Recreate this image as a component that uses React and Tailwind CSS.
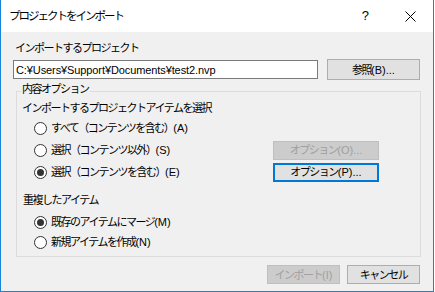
import React from 'react';

const font = { fontFamily: '"Liberation Sans", "Noto Sans CJK JP", sans-serif' };

// Japanese glyphs are squeezed to mimic Meiryo UI; ASCII runs keep normal spacing.
const JText = ({ text }) =>
  text.split(/([\x20-\x7e¥]+)/).map((part, i) =>
    /^[\x20-\x7e¥]+$/.test(part) ? (
      <span key={i} className="tracking-[0px]">{part}</span>
    ) : (
      <span key={i}>{part}</span>
    )
  );

const Radio = ({ checked, label }) => (
  <div className="flex items-center">
    <span className="w-[13px] h-[13px] rounded-full border border-[#333333] bg-white flex items-center justify-center">
      {checked && <span className="w-[7px] h-[7px] rounded-full bg-[#333333]" />}
    </span>
    <span className="ml-[4px] text-[11px] tracking-[-1.5px] leading-[16px]">
      <JText text={label} />
    </span>
  </div>
);

const Button = ({ label, variant = 'normal', className = '' }) => {
  const styles = {
    normal: 'border border-[#adadad] bg-[#e1e1e1] text-black',
    disabled: 'border border-[#bfbfbf] bg-[#cccccc] text-[#a0a0a0]',
    focused: 'border-2 border-[#0078d7] bg-[#e1e1e1] text-black',
  };
  return (
    <div
      className={`flex items-center justify-center text-[11px] tracking-[-1.5px] leading-[16px] ${styles[variant]} ${className}`}
    >
      <JText text={label} />
    </div>
  );
};

export default function App() {
  return (
    <div className="w-[435px] h-[292px] bg-white" style={font}>
      <div className="w-[434px] h-[292px] flex flex-col border-l border-r border-b border-[#1883d7] bg-[#f0f0f0] text-black">
        {/* Title bar */}
        <div className="h-[32px] bg-white flex items-center pl-[8px]">
          <span className="text-[11.5px] tracking-[-2px] leading-[16px]">プロジェクトをインポート</span>
          <span className="ml-auto mr-[36px] text-[13px] leading-[16px]">?</span>
          <svg className="mr-[17px]" width="11" height="11" viewBox="0 0 11 11">
            <path d="M0.5 0.5 L10.5 10.5 M10.5 0.5 L0.5 10.5" stroke="#000" strokeWidth="1" />
          </svg>
        </div>

        {/* Client area */}
        <div className="flex flex-col pl-[12px] pr-[13px] pt-[8px]">
          <div className="pl-[2px] text-[11px] tracking-[-1.5px] leading-[16px]">インポートするプロジェクト</div>
          <div className="mt-[3px] flex items-center">
            <div className="w-[305px] h-[19px] border border-[#7a7a7a] bg-white flex items-center pl-[2px] text-[11px] tracking-[-0.1px] leading-[16px]">
              C:¥Users¥Support¥Documents¥test2.nvp
            </div>
            <Button label="参照(B)..." className="ml-[9px] w-[93px] h-[21px]" />
          </div>

          {/* Content options group */}
          <div className="relative mt-[11px] ml-[3px] w-[405px] border border-[#dcdcdc] pl-[5px] pr-[41px] pt-[8px] pb-[4px]">
            <span className="absolute -top-[11px] left-[4px] px-[1px] bg-[#f0f0f0] text-[11px] tracking-[-1.5px] leading-[16px]">
              内容オプション
            </span>
            <div className="text-[11px] tracking-[-1.5px] leading-[16px]">インポートするプロジェクトアイテムを選択</div>
            <div className="mt-[1px] flex flex-col">
              <div className="h-[22px] flex items-center pl-[12px]">
                <Radio label="すべて（コンテンツを含む）(A)" />
              </div>
              <div className="h-[22px] flex items-center justify-between pl-[12px]">
                <Radio label="選択（コンテンツ以外）(S)" />
                <Button variant="disabled" label="オプション(O)..." className="w-[106px] h-[19px]" />
              </div>
              <div className="h-[22px] flex items-center justify-between pl-[12px]">
                <Radio checked label="選択（コンテンツを含む）(E)" />
                <Button variant="focused" label="オプション(P)..." className="w-[106px] h-[19px]" />
              </div>
            </div>

            <div className="mt-[9px] pl-[1px] text-[11px] tracking-[-1.5px] leading-[16px]">重複したアイテム</div>
            <div className="mt-[4px] flex flex-col">
              <div className="h-[20px] flex items-center pl-[12px]">
                <Radio checked label="既存のアイテムにマージ(M)" />
              </div>
              <div className="h-[20px] flex items-center pl-[12px]">
                <Radio label="新規アイテムを作成(N)" />
              </div>
            </div>
          </div>

          {/* Footer buttons */}
          <div className="mt-[8px] flex justify-end gap-[7px]">
            <Button variant="disabled" label="インポート(I)" className="w-[73px] h-[19px]" />
            <Button label="キャンセル" className="w-[73px] h-[19px]" />
          </div>
        </div>
      </div>
    </div>
  );
}
